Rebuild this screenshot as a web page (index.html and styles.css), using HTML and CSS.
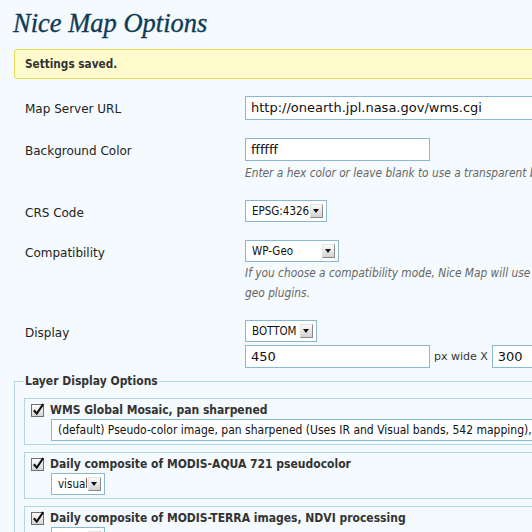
FILE: index.html
```html
<!DOCTYPE html>
<html>
<head>
<meta charset="utf-8">
<title>Nice Map Options</title>
<link rel="stylesheet" href="styles.css">
</head>
<body>
<div class="wrap">
  <h2 class="title">Nice Map Options</h2>
  <div class="notice"><p>Settings saved.</p></div>

  <div class="form">
    <div class="row r1">
      <div class="label">Map Server URL</div>
      <div class="field"><div class="input url">http://onearth.jpl.nasa.gov/wms.cgi</div></div>
    </div>

    <div class="row r2">
      <div class="label">Background Color</div>
      <div class="field">
        <div class="input color">ffffff</div>
        <p class="desc">Enter a hex color or leave blank to use a transparent background.</p>
      </div>
    </div>

    <div class="row r3">
      <div class="label">CRS Code</div>
      <div class="field"><div class="select s-crs"><span class="opt">EPSG:4326</span><span class="arrow"></span></div></div>
    </div>

    <div class="row r4">
      <div class="label">Compatibility</div>
      <div class="field">
        <div class="select s-compat"><span class="opt">WP-Geo</span><span class="arrow"></span></div>
        <p class="desc">If you choose a compatibility mode, Nice Map will use the location data saved by other<br>geo plugins.</p>
      </div>
    </div>

    <div class="row r5">
      <div class="label">Display</div>
      <div class="field">
        <div class="select s-display"><span class="opt">BOTTOM</span><span class="arrow"></span></div>
        <div class="dims">
          <div class="input size">450</div>
          <span class="unit">px wide X</span>
          <div class="input size">300</div>
        </div>
      </div>
    </div>
  </div>

  <fieldset class="layers">
    <legend>Layer Display Options</legend>

    <div class="layer">
      <div class="layer-head">
        <svg class="check" width="14" height="14" viewBox="0 0 14 14"><defs><linearGradient id="cb1" x1="0" y1="0" x2="0" y2="1"><stop offset="0" stop-color="#ffffff"/><stop offset="1" stop-color="#d4d4d4"/></linearGradient></defs><rect x="0.5" y="1.5" width="12" height="12" fill="url(#cb1)" stroke="#6f6f6f"/><path d="M2.8 7.2 L5.8 10.6 L12.2 1.2" fill="none" stroke="#111" stroke-width="2.1"/></svg>
        <span class="layer-title">WMS Global Mosaic, pan sharpened</span>
      </div>
      <div class="select s-wide"><span class="opt">(default) Pseudo-color image, pan sharpened (Uses IR and Visual bands, 542 mapping), gamma 1.5</span><span class="arrow"></span></div>
    </div>

    <div class="layer">
      <div class="layer-head">
        <svg class="check" width="14" height="14" viewBox="0 0 14 14"><defs><linearGradient id="cb2" x1="0" y1="0" x2="0" y2="1"><stop offset="0" stop-color="#ffffff"/><stop offset="1" stop-color="#d4d4d4"/></linearGradient></defs><rect x="0.5" y="1.5" width="12" height="12" fill="url(#cb2)" stroke="#6f6f6f"/><path d="M2.8 7.2 L5.8 10.6 L12.2 1.2" fill="none" stroke="#111" stroke-width="2.1"/></svg>
        <span class="layer-title">Daily composite of MODIS-AQUA 721 pseudocolor</span>
      </div>
      <div class="select s-visual"><span class="opt">visual</span><span class="arrow"></span></div>
    </div>

    <div class="layer">
      <div class="layer-head">
        <svg class="check" width="14" height="14" viewBox="0 0 14 14"><defs><linearGradient id="cb3" x1="0" y1="0" x2="0" y2="1"><stop offset="0" stop-color="#ffffff"/><stop offset="1" stop-color="#d4d4d4"/></linearGradient></defs><rect x="0.5" y="1.5" width="12" height="12" fill="url(#cb3)" stroke="#6f6f6f"/><path d="M2.8 7.2 L5.8 10.6 L12.2 1.2" fill="none" stroke="#111" stroke-width="2.1"/></svg>
        <span class="layer-title">Daily composite of MODIS-TERRA images, NDVI processing</span>
      </div>
      <div class="select s-visual"><span class="opt">visual</span><span class="arrow"></span></div>
    </div>
  </fieldset>
</div>
</body>
</html>
```

FILE: styles.css
```css
html, body {
  margin: 0;
  padding: 0;
  width: 532px;
  height: 532px;
  overflow: hidden;
  background: #f4fafd;
}

.wrap {
  width: 900px;
  padding-left: 14px;
  font-family: "DejaVu Sans", "Liberation Sans", sans-serif;
  color: #222;
}

.title {
  margin: 6px 0 0 -1px;
  font-family: "Liberation Serif", "DejaVu Serif", serif;
  font-style: italic;
  font-weight: normal;
  font-size: 26.5px;
  line-height: 34px;
  color: #123a57;
  -webkit-text-stroke: 0.35px #123a57;
}

.notice {
  margin-top: 9px;
  background: #fffbcc;
  border: 1px solid #e6db55;
  border-radius: 3px;
  padding: 0 10px;
}

.notice p {
  margin: 0;
  font-family: "DejaVu Sans Condensed", "DejaVu Sans", sans-serif;
  font-weight: bold;
  font-size: 11.7px;
  line-height: 28px;
  color: #333;
}

.form {
  margin-top: 17px;
  display: flex;
  flex-direction: column;
  gap: 17px;
}

.row {
  display: grid;
  grid-template-columns: 231px 1fr;
  align-items: start;
}

.r2, .r4 { margin-top: 1px; }

.label {
  padding-left: 11px;
  padding-top: 5px;
  font-size: 12px;
  line-height: 17px;
  color: #222;
}

.field {
  display: flex;
  flex-direction: column;
  align-items: flex-start;
}

.input {
  box-sizing: border-box;
  border: 1px solid #89b9d2;
  background: #fff;
  font-size: 13px;
  color: #111;
  padding-left: 5px;
  height: 23px;
  line-height: 21px;
  white-space: nowrap;
  overflow: hidden;
}

.input.url { width: 420px; height: 24px; line-height: 22px; }
.input.color { width: 185px; }
.input.size { width: 185px; }

.desc {
  margin: 2px 0 0 0;
  font-family: "DejaVu Sans Condensed", "DejaVu Sans", sans-serif;
  font-size: 11.8px;
  font-style: italic;
  line-height: 20px;
  color: #666;
  white-space: nowrap;
}

.r4 .desc { margin-top: 1px; }

.dims {
  display: flex;
  align-items: center;
  gap: 4px;
  margin-top: 3px;
}

.unit {
  font-size: 11px;
  color: #333;
}

.select {
  box-sizing: border-box;
  display: flex;
  align-items: center;
  height: 22px;
  border: 1px solid #89b9d2;
  background: #fff;
  padding: 0 3px 0 6px;
  font-family: "DejaVu Sans Condensed", "DejaVu Sans", sans-serif;
  font-size: 11.5px;
  color: #111;
  white-space: nowrap;
  overflow: hidden;
}

.select .opt {
  flex: 1 1 auto;
  overflow: hidden;
}

.select .arrow {
  flex: none;
  position: relative;
  box-sizing: border-box;
  width: 13px;
  height: 14px;
  margin-left: 1px;
  background: linear-gradient(#fbfbfb, #d2d2d2);
  border: 1px solid;
  border-color: #e4e4e4 #8a8a8a #8a8a8a #e4e4e4;
}

.select .arrow::after {
  content: "";
  position: absolute;
  left: 2px;
  top: 4px;
  border-left: 3.5px solid transparent;
  border-right: 3.5px solid transparent;
  border-top: 4px solid #111;
}

.s-crs { width: 82px; }
.s-compat { width: 94px; }
.s-display { width: 72px; }
.s-visual { width: 54px; margin-left: 20px; }
.s-wide { width: 700px; margin-left: 20px; }
.s-wide .opt { font-size: 12px; }

.layers {
  margin: 4px 0 0 0;
  border: 1px solid #b3d6e6;
  padding: 8px 0 0 9px;
  min-width: 0;
}

.layers legend {
  padding: 0 1px;
  font-family: "DejaVu Sans Condensed", "DejaVu Sans", sans-serif;
  font-weight: bold;
  font-size: 12px;
  line-height: 18px;
  color: #333;
}

.layer {
  border: 1px solid #b3d6e6;
  padding: 2px 6px 3px 6px;
  margin-bottom: 7px;
}

.layer-head {
  display: flex;
  align-items: center;
  gap: 5px;
  height: 18px;
}

.check { flex: none; }

.layer-title {
  font-family: "DejaVu Sans Condensed", "DejaVu Sans", sans-serif;
  font-weight: bold;
  font-size: 12px;
  line-height: 18px;
  color: #333;
  white-space: nowrap;
}
```
